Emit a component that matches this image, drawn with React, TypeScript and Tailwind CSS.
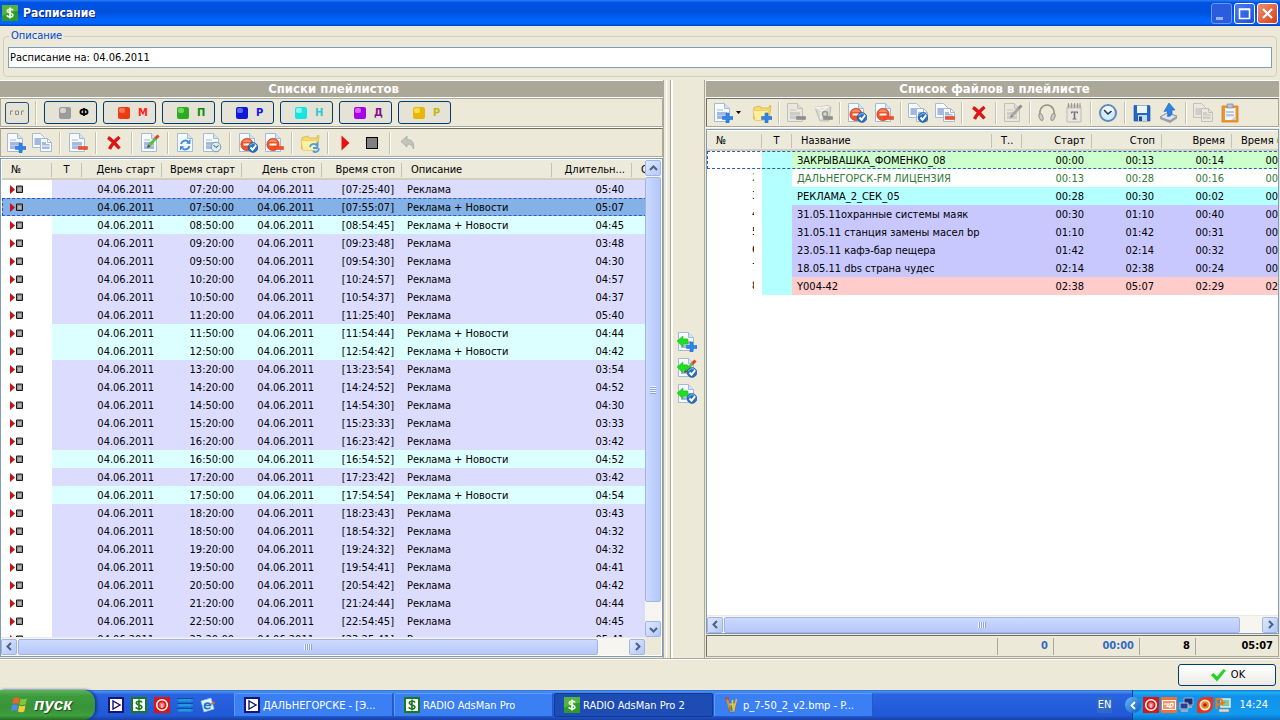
import React, {FC, ReactNode} from 'react';
import clsx from 'clsx';

type TPlaylist = {start: string; stop: string; length: string; news?: boolean};
type TFile = {name: string; start: string; stop: string; time: string; rest: string; className: string};

const DATE = '04.06.2011';

const playlists: TPlaylist[] = [
  {start: '07:20:00', stop: '[07:25:40]', length: '05:40'},
  {start: '07:50:00', stop: '[07:55:07]', length: '05:07', news: true},
  {start: '08:50:00', stop: '[08:54:45]', length: '04:45', news: true},
  {start: '09:20:00', stop: '[09:23:48]', length: '03:48'},
  {start: '09:50:00', stop: '[09:54:30]', length: '04:30'},
  {start: '10:20:00', stop: '[10:24:57]', length: '04:57'},
  {start: '10:50:00', stop: '[10:54:37]', length: '04:37'},
  {start: '11:20:00', stop: '[11:25:40]', length: '05:40'},
  {start: '11:50:00', stop: '[11:54:44]', length: '04:44', news: true},
  {start: '12:50:00', stop: '[12:54:42]', length: '04:42', news: true},
  {start: '13:20:00', stop: '[13:23:54]', length: '03:54'},
  {start: '14:20:00', stop: '[14:24:52]', length: '04:52'},
  {start: '14:50:00', stop: '[14:54:30]', length: '04:30'},
  {start: '15:20:00', stop: '[15:23:33]', length: '03:33'},
  {start: '16:20:00', stop: '[16:23:42]', length: '03:42'},
  {start: '16:50:00', stop: '[16:54:52]', length: '04:52', news: true},
  {start: '17:20:00', stop: '[17:23:42]', length: '03:42'},
  {start: '17:50:00', stop: '[17:54:54]', length: '04:54', news: true},
  {start: '18:20:00', stop: '[18:23:43]', length: '03:43'},
  {start: '18:50:00', stop: '[18:54:32]', length: '04:32'},
  {start: '19:20:00', stop: '[19:24:32]', length: '04:32'},
  {start: '19:50:00', stop: '[19:54:41]', length: '04:41'},
  {start: '20:50:00', stop: '[20:54:42]', length: '04:42'},
  {start: '21:20:00', stop: '[21:24:44]', length: '04:44'},
  {start: '22:50:00', stop: '[22:54:45]', length: '04:45'},
  {start: '23:20:00', stop: '[23:25:41]', length: '05:41'}
];

const files: TFile[] = [
  {name: 'ЗАКРЫВАШКА_ФОМЕНКО_08', start: '00:00', stop: '00:13', time: '00:14', rest: '00:14', className: 'bg-[#ccffcc]'},
  {name: 'ДАЛЬНЕГОРСК-FM ЛИЦЕНЗИЯ', start: '00:13', stop: '00:28', time: '00:16', rest: '00:16', className: 'bg-white text-[#2f7a35]'},
  {name: 'РЕКЛАМА_2_СЕК_05', start: '00:28', stop: '00:30', time: '00:02', rest: '00:02', className: 'bg-[#b4ffff]'},
  {name: '31.05.11охранные системы маяк', start: '00:30', stop: '01:10', time: '00:40', rest: '00:40', className: 'bg-[#c8c8ff]'},
  {name: '31.05.11 станция замены масел bp', start: '01:10', stop: '01:42', time: '00:31', rest: '00:31', className: 'bg-[#c8c8ff]'},
  {name: '23.05.11 кафэ-бар пещера', start: '01:42', stop: '02:14', time: '00:32', rest: '00:32', className: 'bg-[#c8c8ff]'},
  {name: '18.05.11 dbs страна чудес', start: '02:14', stop: '02:38', time: '00:24', rest: '00:24', className: 'bg-[#c8c8ff]'},
  {name: 'Y004-42', start: '02:38', stop: '05:07', time: '02:29', rest: '02:29', className: 'bg-[#ffcccc]'}
];

const filters = [
  {letter: 'Ф', light: '#e4e4e4', color: '#9c9c9c', text: 'text-black'},
  {letter: 'М', light: '#ff8a60', color: '#ee3a12', text: 'text-[#f22]'},
  {letter: 'П', light: '#8ae070', color: '#2cac24', text: 'text-[#0a8a0a]'},
  {letter: 'Р', light: '#7080f8', color: '#1018d8', text: 'text-[#1414f0]'},
  {letter: 'Н', light: '#a8fff8', color: '#18e4e0', text: 'text-[#2ccccc]'},
  {letter: 'Д', light: '#dc80ff', color: '#a800e8', text: 'text-[#86108a]'},
  {letter: 'Р', light: '#ffe860', color: '#e8b808', text: 'text-[#c4b80c]'}
];

/* ---------- icons ---------- */

const Svg: FC<{size?: number; box?: number; children: ReactNode}> = ({size = 20, box = 20, children}) => (
  <svg width={size} height={size} viewBox={`0 0 ${box} ${box}`} className="shrink-0" aria-hidden="true">
    {children}
  </svg>
);

const Page: FC<{grey?: boolean; lines?: boolean}> = ({grey, lines = true}) => (
  <>
    <path d="M1.500 .5h10l5 5v13h-15z" fill={grey ? '#e9e8e0' : '#f8fbff'} stroke={grey ? '#c2c1b8' : '#a3bad8'} />
    <path d="M11.500 .5v5h5" fill={grey ? '#dddcd2' : '#d3e2f6'} stroke={grey ? '#c2c1b8' : '#a3bad8'} />
    {lines && (
      <>
        <path d="M4 6h6v2H4z" fill={grey ? '#d8d7ce' : '#ccd9f0'} />
        <path d="M4 9h10v7H4z" fill={grey ? '#cfcec6' : '#a5b9de'} />
        <path d="M4 12.500h10" stroke={grey ? '#dddcd4' : '#bccdea'} />
      </>
    )}
  </>
);

const Pages: FC<{grey?: boolean}> = ({grey}) => {
  const fill = grey ? '#e9e8e0' : '#f8fbff';
  const stroke = grey ? '#c2c1b8' : '#a3bad8';
  const block = grey ? '#cfcec6' : '#a5b9de';
  return (
    <>
      <path d="M.5 .5h8l4 4v10H.5z" fill={fill} stroke={stroke} />
      <path d="M2.500 5h6v7h-6z" fill={block} />
      <path d="M8.500 5.500h7l4 4v9h-11z" fill={fill} stroke={stroke} />
      <path d="M15.500 5.500v4h4" fill="none" stroke={stroke} />
      <path d="M10 9h4v2h3.500v5H10z" fill={block} />
      <path d="M10 13h7" stroke={fill} />
    </>
  );
};

const Plus = () => (
  <path d="M13 10h3v3.500h4v3h-4V20h-3v-3.500H9.500v-3H13z" fill="#2f86ea" stroke="#1c62c4" strokeWidth=".5" />
);
const Minus: FC<{grey?: boolean}> = ({grey}) => (
  <path d="M10.500 13.500h9v3h-9z" fill={grey ? '#8f8f8b' : '#f0502c'} stroke={grey ? '#808080' : '#d83a18'} strokeWidth=".5" />
);
const Check = () => (
  <>
    <circle cx="15" cy="14.500" r="4.900" fill="#2670c0" stroke="#174f96" strokeWidth=".6" />
    <path d="M11.500 13a4 4 0 0 1 6.500-1.200" stroke="#8cc4f4" fill="none" />
    <path d="M12.500 14.500l2 2.200 3.700-4.500" stroke="#fff" strokeWidth="1.900" fill="none" />
  </>
);
const Stop = () => (
  <>
    <circle cx="9" cy="11.500" r="6.200" fill="#ee5426" stroke="#c8380f" strokeWidth=".6" />
    <path d="M4.500 9a5 5 0 0 1 9 0z" fill="#f88c64" />
    <path d="M5.500 10.500h7v2h-7z" fill="#fff" />
  </>
);
const Pencil: FC<{grey?: boolean}> = ({grey}) => (
  <>
    <path d="M9 12.500L16 5" stroke={grey ? '#a8a8a0' : '#54c43c'} strokeWidth="3" />
    <path d="M15.500 5.500L18.500 2.500" stroke={grey ? '#90908a' : '#e83c28'} strokeWidth="3" />
    <path d="M7 15l1-3.500 2.500 2.200z" fill={grey ? '#888' : '#5a4a28'} />
  </>
);
const Arrows = () => (
  <>
    <path d="M5 11a4.500 4.500 0 0 1 7-2.500" stroke="#3c8ae4" strokeWidth="2" fill="none" />
    <path d="M10 10.500l4.500.5V6z" fill="#3c8ae4" />
    <path d="M13.500 13a4.500 4.500 0 0 1-7 2.500" stroke="#3c8ae4" strokeWidth="2" fill="none" />
    <path d="M8.500 13.500L4 13v4.500z" fill="#3c8ae4" />
  </>
);
const Folder = () => (
  <>
    <path d="M2 4.500l6-1.500 1 2h8l1-3 1 1-2 13H1.500z" fill="#f6dc6c" stroke="#d8b048" strokeWidth=".8" />
    <path d="M1 7.500h13.500l1.500-2 .5 12L3 17.500z" fill="#fdf0a0" stroke="#e0bc54" strokeWidth=".6" />
  </>
);
const GreenArrow = () => (
  <path d="M0 9l6-5v3h5v5H6v3z" fill="#1fe01f" stroke="#12b812" strokeWidth=".5" />
);

const IconPageAdd = () => <Svg><Page /><Plus /></Svg>;
const IconPages: FC<{grey?: boolean}> = ({grey}) => <Svg><Pages grey={grey} /></Svg>;
const IconPageRemove: FC<{grey?: boolean}> = ({grey}) => <Svg><Page grey={grey} /><Minus grey={grey} /></Svg>;
const IconDelete = () => (
  <Svg>
    <path d="M4 4.500c3.500 2 8 7 11.500 11M15.500 4C12 7 7.500 12 5.500 16" stroke="#dc1616" strokeWidth="3.400" fill="none" />
  </Svg>
);
const IconEdit: FC<{grey?: boolean}> = ({grey}) => <Svg><Page grey={grey} /><Pencil grey={grey} /></Svg>;
const IconRefresh = () => <Svg><Page lines={false} /><Arrows /></Svg>;
const IconPageClock = () => (
  <Svg>
    <Page />
    <circle cx="14" cy="14" r="4.800" fill="#d8edf4" stroke="#7c9cac" />
    <path d="M11.500 12l2.500 2.500 2.500-2" stroke="#345" fill="none" />
  </Svg>
);
const IconStopCheck = () => <Svg><Page lines={false} /><Stop /><Check /></Svg>;
const IconStopMinus = () => <Svg><Page lines={false} /><Stop /><Minus /></Svg>;
const IconFolderRefresh = () => (
  <Svg>
    <Folder />
    <path d="M10 14a3.500 3.500 0 0 1 6-2l1.500-1.500V15H13M19 15.500a3.500 3.500 0 0 1-6 2.500" stroke="#4c9ce8" strokeWidth="1.800" fill="none" />
  </Svg>
);
const IconFolderAdd = () => <Svg><Folder /><Plus /></Svg>;
const IconPlay = () => <Svg><path d="M5.500 2.500v15l8-7.500z" fill="#e81010" /></Svg>;
const IconStopSquare = () => (
  <Svg><rect x="4.500" y="4.500" width="11" height="11" fill="#808080" stroke="#000" /></Svg>
);
const IconUndo = () => (
  <Svg>
    <path d="M3 8.500L9 3v3.500c5 0 7.500 3 6.500 9.500-1-3.500-3-5-6.500-5V14z" fill="#c4c4be" stroke="#a4a49c" strokeWidth=".7" />
  </Svg>
);
const IconTrash = () => (
  <Svg>
    <path d="M2 4.500l14-2 2 2-2.500 13.500H7z" fill="#dcdbd3" stroke="#bcbbb2" />
    <path d="M2 5l14-1.500M5 5l4 3 5-4M8 9v7" stroke="#f4f3ec" strokeWidth="1.500" fill="none" />
    <circle cx="12" cy="11" r="2.500" fill="none" stroke="#9c9c96" strokeWidth="1.500" />
    <Minus grey />
  </Svg>
);
const IconPagesCheck = () => <Svg><Pages /><Check /></Svg>;
const IconPagesMinus = () => <Svg><Pages /><Minus /></Svg>;
const IconHeadphones = () => (
  <Svg>
    <path d="M3.500 13c-2-6 1.500-11 6.500-11s8.500 5 6.500 11" fill="none" stroke="#92928c" strokeWidth="1.500" />
    <ellipse cx="4" cy="14" rx="1.800" ry="3.500" transform="rotate(-20 4 14)" fill="#cfcec6" stroke="#92928c" />
    <ellipse cx="16" cy="14" rx="1.800" ry="3.500" transform="rotate(20 16 14)" fill="#cfcec6" stroke="#92928c" />
  </Svg>
);
const IconTextPad = () => (
  <Svg>
    <path d="M3 4h14v15H3z" fill="#e8e7df" stroke="#bcbbb2" />
    <path d="M3 1.500h14v4H3z" fill="#c8c7be" />
    <path d="M4.500 0v5M7.500 0v5M10.500 0v5M13.500 0v5M16 0v5" stroke="#9a9a92" />
    <path d="M7 8.500h7v2h-1l-.5-1H11.300v6h1.200v1H8.500v-1h1.200v-6H8.500l-.5 1H7z" fill="#707070" />
  </Svg>
);
const IconClock = () => (
  <Svg>
    <circle cx="10" cy="10" r="8" fill="#d4ecfb" stroke="#5c8cc0" strokeWidth="2" />
    <path d="M4 9a6 6 0 0 1 12 0z" fill="#f2faff" />
    <path d="M6 7l4 4 3.500-3" stroke="#203850" strokeWidth="1.600" fill="none" />
  </Svg>
);
const IconSave = () => (
  <Svg>
    <path d="M2 2.500h15.500l.5 1V18H2z" fill="#2268c8" stroke="#164c9c" strokeWidth=".6" />
    <path d="M5 2.500h10v7.500H5z" fill="#eef4fc" />
    <path d="M6 12h9v6H6z" fill="#c8d8ec" />
    <path d="M7 13.500h3V18H7z" fill="#164c9c" />
  </Svg>
);
const IconEject = () => (
  <Svg>
    <path d="M1 14l7-4 10 3-7 6z" fill="#e2e4e8" stroke="#888e98" />
    <path d="M1 14l10 3v3L1 16zM18 13v2.500L11 20v-3z" fill="#9aa0aa" />
    <path d="M10 0l6 7h-3v4c-1 2-3 3-5 2 1-1 1-2 .5-3V8L5 8.500z" fill="#2d84e4" stroke="#185cb0" strokeWidth=".6" />
  </Svg>
);
const IconClipboard = () => (
  <Svg>
    <path d="M2 3h16v16H2z" fill="#f0962c" stroke="#d07814" strokeWidth=".7" />
    <path d="M5 5h10.500v12H5z" fill="#f4f8fe" />
    <path d="M6 8h8v5.500H6z" fill="#b8cae8" />
    <path d="M6 10.500h8" stroke="#f4f8fe" />
    <path d="M7 1h6v4H7z" fill="#b8c4d4" stroke="#78889c" strokeWidth=".7" />
    <path d="M15.500 13v4H11z" fill="#c4d4ec" />
  </Svg>
);
const IconDollar: FC<{framed?: boolean}> = ({framed}) => (
  <Svg size={16} box={16}>
    <rect width="16" height="16" fill={framed ? '#fff' : '#2f9a2a'} />
    {framed ? (
      <rect x="1" y="1" width="14" height="14" fill="none" stroke="#187a1c" strokeWidth="2" />
    ) : (
      <path d="M0 0h16v6c-6 0-10 2-16 5z" fill="#6cc44c" opacity=".6" />
    )}
    <path
      d="M11 5.500C10.500 3.800 5.300 3.500 5.300 6c0 2.400 5.600 1.400 5.600 4 0 2.700-5.400 2.300-6 .3M8 2.500v11"
      fill="none"
      stroke={framed ? '#187a1c' : '#f4fff0'}
      strokeWidth="1.600"
    />
  </Svg>
);
const IconPlayer = () => (
  <Svg size={16} box={16}>
    <rect width="16" height="16" fill="#fff" />
    <rect x="1" y="1" width="14" height="14" fill="none" stroke="#14147c" strokeWidth="2" />
    <path d="M5 4v8l7-4z" fill="#fff" stroke="#14147c" strokeWidth="1.400" />
  </Svg>
);
const IconRecord = () => (
  <Svg size={16} box={16}>
    <rect width="16" height="16" fill="#dc1414" />
    <circle cx="8" cy="8" r="5.300" fill="none" stroke="#fff" strokeWidth="1.600" />
    <circle cx="8" cy="8" r="2.700" fill="#f07878" />
    <path d="M8 7v4" stroke="#fff" />
  </Svg>
);
const IconStack = () => (
  <Svg size={16} box={16}>
    <path d="M0 1h16v3l-2 1H2L0 4zM0 6h16v3l-2 1H2L0 9zM0 11h16v3l-2 1H2l-2-1z" fill="#1687d8" />
    <path d="M0 1.500h16M0 6.500h16M0 11.500h16" stroke="#0c4c9c" />
    <path d="M2 3h12M2 8h12M2 13h12" stroke="#30a8ec" />
  </Svg>
);
const IconMail = () => (
  <Svg size={16} box={16}>
    <path d="M1 4l10-3 3 11-10 3z" fill="#e6f3fc" stroke="#90c0e4" strokeWidth=".7" />
    <path d="M4.500 8.500h6c0-3-5.500-3.500-6 0-.5 3.500 4 4 6 2" fill="none" stroke="#1c78c8" strokeWidth="1.700" />
    <path d="M11 7l4-1.500" stroke="#f06828" strokeWidth="1.500" />
  </Svg>
);
const IconPaint = () => (
  <Svg size={16} box={16}>
    <path d="M4 6h8l-1 9H5.500z" fill="#b8c4b0" stroke="#506070" strokeWidth=".7" />
    <path d="M6 13L3 2" stroke="#e8882c" strokeWidth="2" />
    <path d="M1 1.500h4" stroke="#d83c1c" strokeWidth="2" />
    <path d="M8.500 12V3" stroke="#e8d028" strokeWidth="1.600" />
    <path d="M10 12l2.500-10" stroke="#f0b43c" strokeWidth="1.600" />
    <path d="M7 8l1 6" stroke="#28a040" strokeWidth="1.500" />
    <path d="M6 10v4" stroke="#d83c1c" />
  </Svg>
);
const IconWindows = () => (
  <Svg size={20} box={20}>
    <path d="M3.500 3.500Q6.500 1.500 9.500 3l-1.200 6Q5.500 7.500 2.300 9.200z" fill="#f0602c" />
    <path d="M10.500 3.500q3 1.500 6.500-.2l-1.300 6q-3 1.600-6.400.1z" fill="#84c43c" />
    <path d="M2 10.300Q5 8.800 8 10.200L6.800 16Q4 14.500.8 16.200z" fill="#4c8cf0" />
    <path d="M9.100 10.500q3 1.500 6.400-.1l-1.300 6q-3 1.600-6.300.1z" fill="#f8cc38" />
  </Svg>
);
const IconScript = () => (
  <Svg size={16} box={16}>
    <rect width="16" height="16" fill="#f07038" />
    <path d="M1.500 3.500h13v9h-13z" fill="#f49468" stroke="#fff" />
    <path d="M3 7h4.500L6 9.500h3M8.500 11l1-4.500q3-1 2.500 1.500T8 9.500" fill="none" stroke="#fff" strokeWidth="1.200" />
  </Svg>
);
const IconNetwork = () => (
  <Svg size={16} box={16}>
    <path d="M5 1h9v7H5z" fill="#1c2c78" stroke="#a8b0c8" />
    <path d="M8 9h5v2H8z" fill="#a0a8c0" />
    <path d="M1 6h8v6H1z" fill="#28408c" stroke="#c4c8d8" />
    <path d="M2 13h7v2H2z" fill="#a0a8c0" />
  </Svg>
);
const IconEye = () => (
  <Svg size={16} box={16}>
    <path d="M0 16V8a8 8 0 0 1 8-8h8v8a8 8 0 0 1-8 8z" fill="#e8341c" />
    <circle cx="8" cy="8" r="5.500" fill="#fdf0dc" />
    <circle cx="8" cy="8" r="3.800" fill="#f08428" />
    <circle cx="8" cy="8" r="1.800" fill="#b81c0c" />
  </Svg>
);
const IconPc = () => (
  <Svg size={16} box={16}>
    <path d="M6 2h9v8H6z" fill="#7ccaa4" stroke="#e8ece8" strokeWidth="1.500" />
    <path d="M4 12h10v3H4z" fill="#e0dccc" stroke="#908c7c" strokeWidth=".6" />
    <path d="M1.500 12V2h3q3 .3 2.500 3T2 7.500M6 8l4-3" fill="none" stroke="#f07818" strokeWidth="2" />
  </Svg>
);

const IconLoad: FC<{kind: 'add' | 'edit' | 'check'}> = ({kind}) => (
  <Svg>
    <Page />
    {kind === 'edit' && <Pencil />}
    <GreenArrow />
    {kind === 'add' ? <Plus /> : <Check />}
  </Svg>
);

/* ---------- controls ---------- */

const Tool: FC<{label: string; wide?: boolean; children: ReactNode}> = ({label, wide, children}) => (
  <button type="button" aria-label={label} className={clsx('flex h-6 shrink-0 items-center justify-center', wide ? 'w-[27px]' : 'w-[26px]')}>
    {children}
  </button>
);

const Sep: FC<{narrow?: boolean}> = ({narrow}) => (
  <span className={clsx('flex h-[22px] shrink-0 justify-center', narrow ? 'w-[7px]' : 'w-[10px]')}>
    <span className="w-[2px] border-r border-white bg-[#c5c2b2]" />
  </span>
);

type TDirection = 'up' | 'down' | 'left' | 'right';

const chevrons: Record<TDirection, string> = {
  up: 'M1 6l3.500-3.500L8 6',
  down: 'M1 3l3.500 3.500L8 3',
  left: 'M6 1L2.500 4.500 6 8',
  right: 'M3 1l3.500 3.500L3 8'
};

const ScrollButton: FC<{direction: TDirection}> = ({direction}) => (
  <button
    type="button"
    aria-label={direction}
    className="flex h-4 w-4 shrink-0 items-center justify-center rounded-[2px] border border-[#9fb5ea] bg-linear-to-br from-[#dfe8ff] to-[#b4c8f6]"
  >
    <Svg size={9} box={9}>
      <path d={chevrons[direction]} fill="none" stroke="#4d6185" strokeWidth="2" />
    </Svg>
  </button>
);

const Grip: FC<{vertical?: boolean}> = ({vertical}) => (
  <span className={clsx('flex', vertical && 'flex-col')}>
    {[0, 1, 2, 3].map(i => (
      <span key={i} className={clsx('border-[#8ca4e0] bg-[#eef3ff]', vertical ? 'h-[2px] w-[6px] border-b' : 'h-[6px] w-[2px] border-r')} />
    ))}
  </span>
);

const HScroll: FC<{thumb: string}> = ({thumb}) => (
  <div className="flex h-[18px] min-w-0 flex-1 items-center border-t border-[#eceae0] bg-[#f6f5f0]">
    <ScrollButton direction="left" />
    <div className="flex min-w-0 flex-1 px-px">
      <div className={clsx('flex h-4 items-center justify-center rounded-[2px] border border-[#9fb5ea] bg-linear-to-b from-[#ccdaff] to-[#b8c8f8]', thumb)}>
        <Grip />
      </div>
    </div>
    <ScrollButton direction="right" />
  </div>
);

const PanelTitle: FC<{children: ReactNode}> = ({children}) => (
  <h2 className="flex h-[18px] shrink-0 items-center justify-center border-y border-white bg-[#aca899] pl-1 text-[13px] leading-4 font-bold text-white">
    {children}
  </h2>
);

const Th: FC<{children?: ReactNode; left?: boolean; center?: boolean}> = ({children, left, center}) => (
  <th
    className={clsx(
      'h-5 overflow-hidden border-b-2 border-[#d3cfbe] bg-[#ebeadb] p-0 pt-[2px] font-normal whitespace-nowrap',
      left ? 'text-left' : center ? 'text-center' : 'text-right'
    )}
  >
    <span className={clsx('block h-[14px] border-r border-[#c5c2b2] leading-[14px]', left ? 'pl-[9px]' : center ? '' : 'pr-[6px]')}>
      {children}
    </span>
  </th>
);

const valueCell = 'p-0 pt-px pr-2';

const PlaylistTable = () => (
  <table className="w-[670px] table-fixed border-separate border-spacing-0">
    <colgroup>
      <col className="w-[50px]" />
      <col className="w-[30px]" />
      <col className="w-[80px]" />
      <col className="w-[80px]" />
      <col className="w-[80px]" />
      <col className="w-[80px]" />
      <col className="w-[150px]" />
      <col className="w-[80px]" />
      <col className="w-[40px]" />
    </colgroup>
    <thead>
      <tr>
        <Th left>№</Th>
        <Th center>Т</Th>
        <Th>День старт</Th>
        <Th>Время старт</Th>
        <Th>День стоп</Th>
        <Th>Время стоп</Th>
        <Th left>Описание</Th>
        <Th>Длительн...</Th>
        <Th left>С</Th>
      </tr>
    </thead>
    <tbody>
      {playlists.map((row, index) => {
        const selected = index === 1;
        return (
          <tr
            key={row.start}
            className={clsx(
              'h-[18px] text-right',
              selected && 'bg-[#84b2e6] outline-1 -outline-offset-1 outline-[#2a5cb8] outline-dashed',
              !selected && (row.news ? 'bg-[#dcffff]' : 'bg-[#dcdcff]')
            )}
          >
            <td className={clsx('p-0 pl-2', !selected && 'bg-white')}>
              <svg width="13" height="9" viewBox="0 0 13 9" className="block" aria-hidden="true">
                <path d="M0 0v9l5-4.500z" fill="#d01010" />
                <path d="M6.500 1h6v6.500h-6z" fill="#8c8c8c" stroke="#181818" />
                <path d="M8 3h3v3H8z" fill="#b4b4b4" />
              </svg>
            </td>
            <td className="p-0" />
            <td className={valueCell}>{DATE}</td>
            <td className={valueCell}>{row.start}</td>
            <td className={valueCell}>{DATE}</td>
            <td className={valueCell}>{row.stop}</td>
            <td className="p-0 pt-px pl-[5px] text-left">{row.news ? 'Реклама + Новости' : 'Реклама'}</td>
            <td className={valueCell}>{row.length}</td>
            <td className="p-0" />
          </tr>
        );
      })}
    </tbody>
  </table>
);

const FileTable = () => (
  <table className="w-[595px] table-fixed border-separate border-spacing-0">
    <colgroup>
      <col className="w-[55px]" />
      <col className="w-[30px]" />
      <col className="w-[200px]" />
      <col className="w-[30px]" />
      <col className="w-[70px]" />
      <col className="w-[70px]" />
      <col className="w-[70px]" />
      <col className="w-[70px]" />
    </colgroup>
    <thead>
      <tr>
        <Th left>№</Th>
        <Th center>Т</Th>
        <Th left>Название</Th>
        <Th left>Т..</Th>
        <Th>Старт</Th>
        <Th>Стоп</Th>
        <Th>Время</Th>
        <Th left>Время (</Th>
      </tr>
    </thead>
    <tbody>
      {files.map((file, index) => (
        <tr
          key={file.name}
          className={clsx(
            'h-[18px] text-right',
            file.className,
            index === 0 && 'outline-1 -outline-offset-1 outline-[#2a5cb8] outline-dashed'
          )}
        >
          <td className="bg-white p-0 pr-2">
            {index > 0 && <span className="ml-auto block h-3 w-[2px] overflow-hidden text-left leading-3">{index + 1}</span>}
          </td>
          <td className="bg-[#b4ffff] p-0" />
          <td className="p-0 pt-px pl-[5px] text-left whitespace-nowrap">{file.name}</td>
          <td className="p-0" />
          <td className={valueCell}>{file.start}</td>
          <td className={valueCell}>{file.stop}</td>
          <td className={valueCell}>{file.time}</td>
          <td className={valueCell}>{file.rest}</td>
        </tr>
      ))}
    </tbody>
  </table>
);

const TaskButton: FC<{icon: ReactNode; active?: boolean; children: ReactNode}> = ({icon, active, children}) => (
  <button
    type="button"
    className={clsx(
      'flex h-6 w-[159px] items-center gap-[3px] rounded-[2px] border pr-2 pl-[9px] text-left',
      active ? 'border-[#123a90] bg-[#1c4cb4]' : 'border-[#5c9cff] border-r-[#2258c8] border-b-[#2258c8] bg-[#3a80f4]'
    )}
  >
    {icon}
    <span className="truncate pt-[2px] leading-4">{children}</span>
  </button>
);

const captionButton = 'flex h-[21px] w-[21px] items-center justify-center rounded-[3px] border';

const TitleBar = () => (
  <header className="flex h-[26px] shrink-0 items-center justify-between bg-[linear-gradient(#2a7cf8_0%,#0054e3_10%,#0050dc_45%,#0064fc_75%,#0066ff_90%,#0040c0_100%)] pr-[2px] pl-[2px]">
    <div className="flex items-center gap-[5px]">
      <IconDollar />
      <h1 className="text-[12px] leading-4 font-bold text-white [text-shadow:1px_1px_#0a1e78]">Расписание</h1>
    </div>
    <div className="flex gap-[2px]">
      <button type="button" aria-label="Свернуть" className={clsx(captionButton, 'border-[#6c98f0] bg-[#2a5ce0]')}>
        <Svg size={13} box={13}><path d="M1 10h7v3H1z" fill="#98b4f4" /></Svg>
      </button>
      <button type="button" aria-label="Развернуть" className={clsx(captionButton, 'border-white bg-linear-to-br from-[#4c7cf0] to-[#1c50d8]')}>
        <Svg size={13} box={13}><path d="M1.500 2h10v9.500h-10zM1 2.500h11" fill="none" stroke="#fff" strokeWidth="1.600" /></Svg>
      </button>
      <button type="button" aria-label="Закрыть" className={clsx(captionButton, 'border-white bg-linear-to-br from-[#f08c6c] to-[#d43c10]')}>
        <Svg size={13} box={13}><path d="M2 2l9 9M11 2l-9 9" stroke="#fff" strokeWidth="2.200" /></Svg>
      </button>
    </div>
  </header>
);

const PlaylistPanel = () => (
  <section className="flex min-h-0 min-w-0 flex-col border-r border-[#aca899] pb-px">
    <PanelTitle>Списки плейлистов</PanelTitle>
    <div className="flex h-[30px] shrink-0 border-b border-white">
      <div className="flex flex-1 items-center gap-[6px] border border-[#aca899] pl-1">
        <button type="button" aria-label="Надписи" className="flex h-[22px] w-6 items-center justify-center rounded-[3px] border border-[#24507c] bg-[#e5e3d6]">
          <Svg size={16} box={16}>
            <path d="M1.500 10V6H4M6.500 6h3v3.500h-3zM12.500 10V6H15" fill="none" stroke="#8c8c84" />
          </Svg>
        </button>
        <span className="mr-px h-6 w-[2px] border-r border-white bg-[#c5c2b2]" />
        {filters.map((filter, index) => (
          <button
            key={index}
            type="button"
            className="flex h-[23px] w-[53px] items-center gap-2 rounded-[3px] border border-[#003c74] bg-[#e5e3d6] pl-[14px]"
          >
            <Svg size={12} box={12}>
              <rect width="12" height="12" rx="2" fill={filter.color} />
              <rect x="1" y="1" width="6" height="5" rx="2" fill={filter.light} opacity=".8" />
            </Svg>
            <span className={clsx('text-[11px] leading-4 font-bold', filter.text)}>{filter.letter}</span>
          </button>
        ))}
      </div>
    </div>
    <div className="flex h-[30px] shrink-0 border-b border-white">
      <div className="flex flex-1 items-center border border-[#aca899] border-t-[#716f64] pl-[2px]">
        <Tool label="Добавить"><IconPageAdd /></Tool>
        <Tool label="Копировать"><IconPages /></Tool>
        <Sep />
        <Tool label="Убрать"><IconPageRemove /></Tool>
        <Sep />
        <Tool label="Удалить"><IconDelete /></Tool>
        <Sep />
        <Tool label="Изменить"><IconEdit /></Tool>
        <Sep />
        <Tool label="Обновить"><IconRefresh /></Tool>
        <Tool label="Время"><IconPageClock /></Tool>
        <Sep />
        <Tool label="Включить"><IconStopCheck /></Tool>
        <Tool label="Отключить"><IconStopMinus /></Tool>
        <Sep />
        <Tool label="Папка"><IconFolderRefresh /></Tool>
        <Sep />
        <Tool label="Пуск"><IconPlay /></Tool>
        <Tool label="Стоп"><IconStopSquare /></Tool>
        <Sep />
        <Tool label="Отменить"><IconUndo /></Tool>
      </div>
    </div>
    <div className="flex min-h-0 flex-1 flex-col border border-[#7f9db9] bg-white p-px pl-0">
      <div className="flex min-h-0 flex-1">
        <div className="min-w-0 flex-1 overflow-hidden pl-px">
          <PlaylistTable />
        </div>
        <div className="flex w-4 shrink-0 flex-col items-center bg-[#f6f5f0]">
          <ScrollButton direction="up" />
          <div className="flex min-h-0 w-full flex-1 flex-col items-center py-px">
            <div className="flex h-[96%] w-4 items-center justify-center rounded-[2px] border border-[#9fb5ea] bg-linear-to-r from-[#ccdaff] to-[#b4c6fa]">
              <Grip vertical />
            </div>
          </div>
          <ScrollButton direction="down" />
        </div>
      </div>
      <div className="flex shrink-0 bg-[#ece9d8] pr-4">
        <HScroll thumb="w-[95%]" />
      </div>
    </div>
  </section>
);

const statusCell = 'flex h-[17px] items-center justify-end border-l border-[#aca899] pr-[5px]';

const FilePanel = () => (
  <section className="flex min-h-0 min-w-0 flex-col border-l border-[#aca899] pr-px pb-px pl-px">
    <PanelTitle>Список файлов в плейлисте</PanelTitle>
    <div className="flex h-[30px] shrink-0 border-b border-white">
      <div className="flex flex-1 items-center border border-[#aca899] border-t-[#716f64] border-l-[#716f64] pl-[2px]">
        <Tool wide label="Добавить файл"><IconPageAdd /></Tool>
        <button type="button" aria-label="Ещё" className="flex h-6 w-3 shrink-0 items-center justify-start">
          <Svg size={5} box={5}><path d="M0 1h5L2.500 4z" fill="#000" /></Svg>
        </button>
        <Tool wide label="Добавить папку"><IconFolderAdd /></Tool>
        <Sep narrow />
        <Tool wide label="Убрать файл"><IconPageRemove grey /></Tool>
        <Tool wide label="Очистить"><IconTrash /></Tool>
        <Sep narrow />
        <Tool wide label="Включить файл"><IconStopCheck /></Tool>
        <Tool wide label="Отключить файл"><IconStopMinus /></Tool>
        <Sep narrow />
        <Tool wide label="Выбрать все"><IconPagesCheck /></Tool>
        <Tool wide label="Снять выбор"><IconPagesMinus /></Tool>
        <Sep narrow />
        <Tool wide label="Удалить файл"><IconDelete /></Tool>
        <Sep narrow />
        <Tool wide label="Изменить файл"><IconEdit grey /></Tool>
        <Sep narrow />
        <Tool wide label="Прослушать"><IconHeadphones /></Tool>
        <Tool wide label="Текст"><IconTextPad /></Tool>
        <Sep narrow />
        <Tool wide label="Часы"><IconClock /></Tool>
        <Sep narrow />
        <Tool wide label="Сохранить"><IconSave /></Tool>
        <Tool wide label="Выгрузить"><IconEject /></Tool>
        <Sep narrow />
        <Tool wide label="Копировать файл"><IconPages grey /></Tool>
        <Tool wide label="Вставить"><IconClipboard /></Tool>
      </div>
    </div>
    <div className="mt-px flex min-h-0 flex-1 flex-col border border-[#7f9db9] bg-white pt-px">
      <div className="min-h-0 flex-1 overflow-hidden">
        <FileTable />
      </div>
      <div className="flex shrink-0">
        <HScroll thumb="w-[96%]" />
      </div>
    </div>
    <div className="mt-px flex h-[22px] shrink-0 items-center justify-end border border-[#aca899] border-t-[#716f64] border-l-[#716f64] font-bold">
      <span className={clsx(statusCell, 'w-[56px] text-[#316ac5]')}>0</span>
      <span className={clsx(statusCell, 'w-[86px] text-[#316ac5]')}>00:00</span>
      <span className={clsx(statusCell, 'w-[56px]')}>8</span>
      <span className={clsx(statusCell, 'w-[83px]')}>05:07</span>
    </div>
  </section>
);

const TaskBar = () => (
  <footer className="flex h-[30px] shrink-0 items-center bg-[linear-gradient(#3168d5_0%,#4993ee_6%,#2a64e0_14%,#245edb_50%,#2159d6_85%,#1941a5_100%)] text-white">
    <button
      type="button"
      className="flex h-full w-[95px] shrink-0 items-center gap-1 rounded-r-xl bg-[linear-gradient(#5cb45c_0%,#3c9a3c_20%,#389438_60%,#3ea03e_85%,#246c24_100%)] pl-[10px] shadow-[2px_0_3px_#123a90]"
    >
      <IconWindows />
      <span className="font-['Liberation_Sans',sans-serif] text-[17px] leading-6 font-bold italic [text-shadow:1px_1px_1px_#1c4c1c]">пуск</span>
    </button>
    <div className="ml-[13px] flex shrink-0 gap-[7px]">
      <IconPlayer />
      <IconDollar framed />
      <IconRecord />
      <IconStack />
      <IconMail />
    </div>
    <nav className="ml-[18px] flex min-w-0 flex-1 gap-px">
      <TaskButton icon={<IconPlayer />}>ДАЛЬНЕГОРСКЕ - [Э...</TaskButton>
      <TaskButton icon={<IconDollar framed />}>RADIO AdsMan Pro</TaskButton>
      <TaskButton icon={<IconDollar />} active>RADIO AdsMan Pro 2</TaskButton>
      <TaskButton icon={<IconPaint />}>p_7-50_2_v2.bmp - P...</TaskButton>
    </nav>
    <span className="mr-5 bg-[#316ac5] px-[1px] leading-4">EN</span>
    <div className="flex h-full shrink-0 items-center gap-[2px] border-l border-[#0c3c8c] bg-[linear-gradient(#0c78d8_0%,#1cb0f4_8%,#1290e8_20%,#109cf0_80%,#0c70c8_100%)] pr-3">
      <button type="button" aria-label="Скрытые значки" className="-ml-2 flex h-4 w-4 items-center justify-center rounded-full bg-linear-to-br from-[#68b8f8] to-[#0c58c0]">
        <Svg size={9} box={9}><path d="M6 1L2.500 4.500 6 8" fill="none" stroke="#fff" strokeWidth="1.800" /></Svg>
      </button>
      <IconRecord />
      <IconScript />
      <IconNetwork />
      <IconEye />
      <IconPc />
      <span className="ml-[6px] leading-4">14:24</span>
    </div>
  </footer>
);

const App = () => (
  <div className="flex h-screen flex-col overflow-hidden bg-[#ece9d8] font-['DejaVu_Sans_Condensed','Noto_Sans',sans-serif] text-[11px] leading-[14px] text-black">
    <TitleBar />
    <fieldset className="mx-[3px] mt-[3px] mb-[3px] shrink-0 rounded-[4px] border border-[#d0d0bf] px-[4px] pt-1 pb-2">
      <legend className="ml-px px-[2px] text-[#0046d5]">
        <label htmlFor="description">Описание</label>
      </legend>
      <input
        id="description"
        type="text"
        defaultValue="Расписание на: 04.06.2011"
        className="block h-[21px] w-full border border-[#7f9db9] bg-white px-px outline-none"
      />
    </fieldset>
    <main className="grid min-h-0 flex-1 grid-cols-[664fr_40px_576fr] grid-rows-[minmax(0,1fr)]">
      <PlaylistPanel />
      <div className="flex">
        <div className="flex w-[9px] shrink-0 justify-between border-r border-white pl-[2px]">
          <span className="w-px bg-white" />
          <span className="w-[2px] border-l border-[#aca899] bg-white" />
        </div>
        <div className="flex flex-1 flex-col items-center justify-center gap-[2px] pr-[3px] pb-[3px]">
          <Tool label="Загрузить"><IconLoad kind="add" /></Tool>
          <Tool label="Заменить"><IconLoad kind="edit" /></Tool>
          <Tool label="Применить"><IconLoad kind="check" /></Tool>
        </div>
      </div>
      <FilePanel />
    </main>
    <div className="flex h-8 shrink-0 items-center justify-end border-t border-[#aca899] pr-1 shadow-[inset_0_1px_#fff]">
      <button
        type="button"
        className="flex h-[22px] w-[98px] items-center justify-center gap-1 rounded-[3px] border border-[#003c74] bg-linear-to-b from-white to-[#ecebe6]"
      >
        <Svg size={18} box={18}><path d="M2 9l2.500-2L8 10.500 14.500 3 17 4.500 8 15.500z" fill="#22d422" /></Svg>
        OK
      </button>
    </div>
    <TaskBar />
  </div>
);

export default App;
